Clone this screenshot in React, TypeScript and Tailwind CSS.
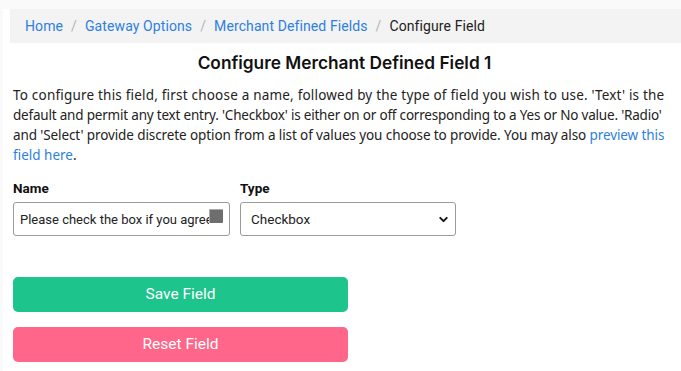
import { ChevronDown } from "lucide-react";

const crumbs = ["Home", "Gateway Options", "Merchant Defined Fields"];

export default function App() {
  return (
    <div className="min-h-screen bg-[#fafafa] pl-[3px] pt-[9px] font-['Roboto',sans-serif] text-[#212529]">
      <div className="min-h-[362px] bg-white pl-[7px]">
        <nav className="flex h-[34px] items-center bg-[#f3f3f3] px-[15px] text-[14px] tracking-[0.1px]">
          {crumbs.map((c) => (
            <span key={c} className="flex items-center">
              <a href="#" className="text-[#2d7fe0]">{c}</a>
              <span className="px-[8px] text-[#b5b5b5]">/</span>
            </span>
          ))}
          <span className="text-[#222]">Configure Field</span>
        </nav>

        <div className="pr-[10px]">
          <h1 className="mt-[8px] pl-[8px] text-center font-['Inter',sans-serif] text-[17.3px] font-semibold leading-[24px] text-[#111]">
            Configure Merchant Defined Field 1
          </h1>

          <p className="mt-[10px] whitespace-nowrap pl-[3px] font-['Noto_Sans',sans-serif] text-[13.5px] leading-[20px] text-[#222]">
            <span className="tracking-[0.2px]">
              To configure this field, first choose a name, followed by the type of field you wish to use. 'Text' is the
            </span>
            <br />
            <span className="tracking-[-0.2px]">
              default and permit any text entry. 'Checkbox' is either on or off corresponding to a Yes or No value. 'Radio'
            </span>
            <br />
            <span className="tracking-[-0.1px]">
              and 'Select' provide discrete option from a list of values you choose to provide. You may also{" "}
              <a href="#" className="text-[#2d7fe0]">preview this</a>
            </span>
            <br />
            <a href="#" className="text-[#2d7fe0]">field here</a>.
          </p>

          <div className="mt-[14px] flex gap-[10px] pl-[3px]">
            <label className="flex w-[217px] flex-col">
              <span className="text-[13.5px] font-bold leading-[18px] text-[#111]">Name</span>
              <div className="relative mt-[5px]">
                <input
                  readOnly
                  value="Please check the box if you agree to the terms"
                  className="h-[34px] w-full rounded-[3px] border border-[#9a9a9a] bg-white pl-[6px] pr-[20px] text-[13px] text-[#222] outline-none"
                />
                <span className="absolute right-[7px] top-[7px] h-[14px] w-[14px] rounded-[1px] border-l border-t border-[#aaa] bg-[#6e6e6e]" />
              </div>
            </label>
            <label className="flex w-[216px] flex-col">
              <span className="text-[13.5px] font-bold leading-[18px] text-[#111]">Type</span>
              <div className="relative mt-[5px]">
                <select className="h-[34px] w-full appearance-none rounded-[3px] border border-[#9a9a9a] bg-white pl-[10px] text-[13.5px] text-[#222] outline-none">
                  <option>Checkbox</option>
                  <option>Text</option>
                  <option>Radio</option>
                  <option>Select</option>
                </select>
                <ChevronDown size={13} strokeWidth={3.5} className="pointer-events-none absolute right-[6px] top-[11px] text-[#111]" />
              </div>
            </label>
          </div>

          <div className="mt-[41px] flex w-[338px] flex-col gap-[15px] pl-[3px]">
            <button className="h-[35px] rounded-[5px] bg-[#1dc48c] text-[15.5px] text-white">Save Field</button>
            <button className="h-[35px] rounded-[5px] bg-[#ff6689] text-[15.5px] text-white">Reset Field</button>
          </div>
        </div>
      </div>
    </div>
  );
}
